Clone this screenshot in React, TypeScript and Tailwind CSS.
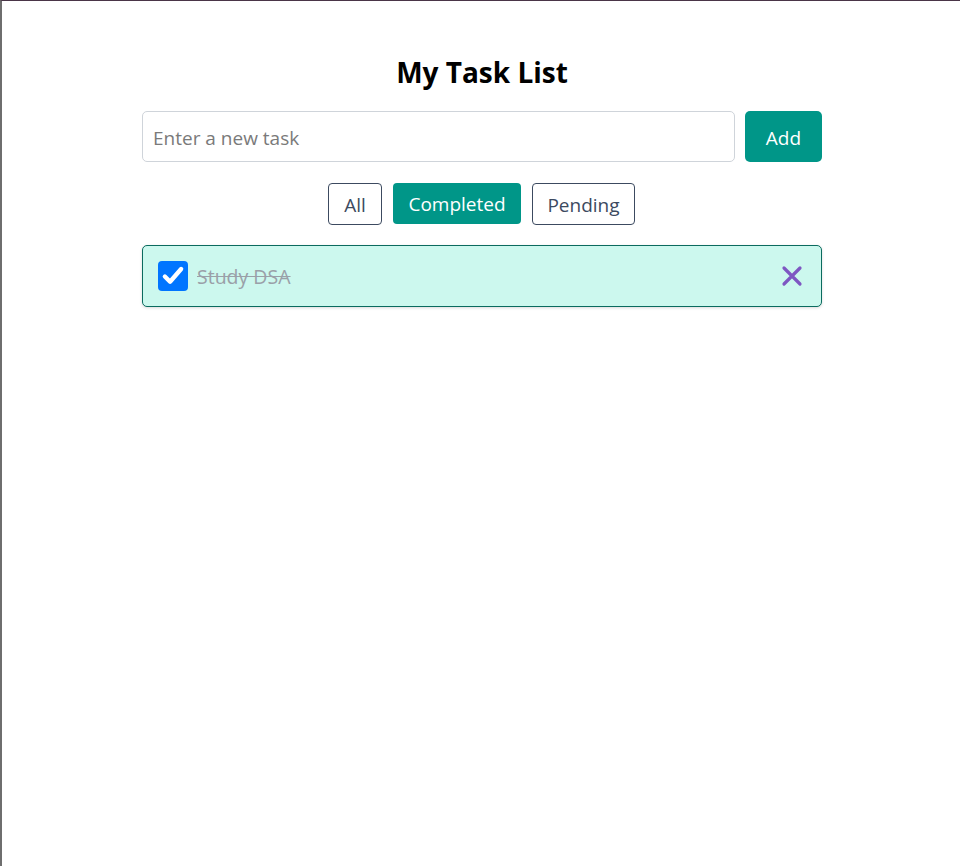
import React from "react";

export default function App() {
  return (
    <div
      className="min-h-[866px] w-full bg-white border-t border-t-[#4a3548] border-l-2 border-l-[#6e6e6e] pl-[2px]"
      style={{ fontFamily: '"Open Sans", "Noto Sans", "Liberation Sans", sans-serif' }}
    >
      <div className="mx-auto w-[680px] pt-[49px]">
        <h1 className="text-center text-[28px] leading-[44px] font-bold text-black">My Task List</h1>
        <div className="mt-[17px] flex gap-[10px]">
          <input
            className="h-[51px] flex-1 rounded-[5px] border border-[#cfd4da] px-[10px] pt-[2px] text-[19px] text-[#333] placeholder:text-[#7a7a7a] outline-none"
            placeholder="Enter a new task"
          />
          <button className="h-[51px] w-[77px] rounded-[5px] bg-[#009688] pt-[3px] text-[19px] text-white">Add</button>
        </div>
        <div className="mt-[21px] flex justify-center gap-[11px] pr-[1px] text-[19px]">
          <button className="h-[42px] w-[54px] rounded-[4px] border border-[#3c4a60] pt-[2px] text-[#3c4a60]">All</button>
          <button className="h-[41px] w-[128px] rounded-[4px] bg-[#009688] pt-[2px] text-white">Completed</button>
          <button className="h-[42px] w-[103px] rounded-[4px] border border-[#3c4a60] pt-[2px] text-[#3c4a60]">Pending</button>
        </div>
        <div className="mt-[20px] flex h-[62px] items-center rounded-[5px] border border-[#0b6b5f] bg-[#ccf8ee] pl-[15px] pr-[18px] shadow-[0_1px_3px_rgba(0,0,0,0.15)]">
          <div className="flex h-[30px] w-[30px] items-center justify-center rounded-[4px] bg-[#0075ff]">
            <svg width="26" height="26" viewBox="0 0 24 24" fill="none">
              <path d="M4.5 12.5l4.8 4.8L19.5 5.5" stroke="white" strokeWidth="4" strokeLinecap="round" strokeLinejoin="round" />
            </svg>
          </div>
          <span className="ml-[9px] flex-1 pt-[2px] text-[19.5px] text-[#9aa0a8] line-through">Study DSA</span>
          <svg width="22" height="22" viewBox="0 0 22 22" fill="none">
            <path d="M3 3L19 19M19 3L3 19" stroke="#7e57c2" strokeWidth="3.2" strokeLinecap="round" />
          </svg>
        </div>
      </div>
    </div>
  );
}
